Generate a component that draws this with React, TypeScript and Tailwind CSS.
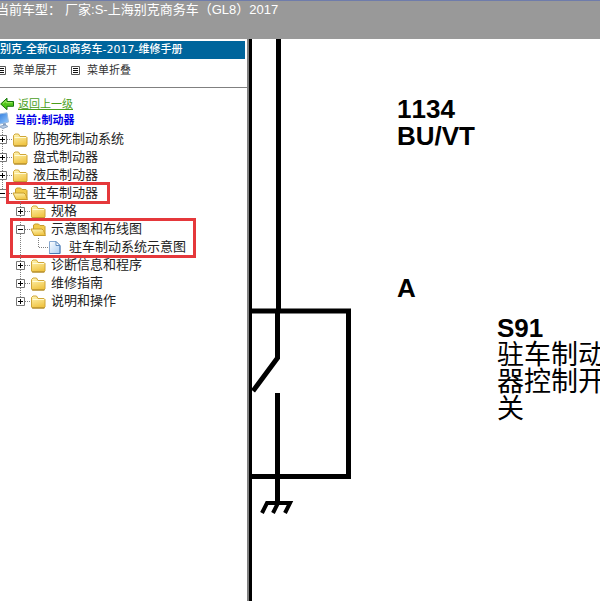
import React from "react";

interface TreeItem {
  label: string;
  kind: "folder" | "open" | "page";
  highlight?: boolean;
  children?: TreeItem[];
}

const TREE: TreeItem[] = [
  { label: "防抱死制动系统", kind: "folder" },
  { label: "盘式制动器", kind: "folder" },
  { label: "液压制动器", kind: "folder" },
  {
    label: "驻车制动器",
    kind: "open",
    highlight: true,
    children: [
      { label: "规格", kind: "folder" },
      {
        label: "示意图和布线图",
        kind: "open",
        highlight: true,
        children: [{ label: "驻车制动系统示意图", kind: "page" }],
      },
      { label: "诊断信息和程序", kind: "folder" },
      { label: "维修指南", kind: "folder" },
      { label: "说明和操作", kind: "folder" },
    ],
  },
];

// gradients shared by all tree icons
function IconDefs() {
  return (
    <svg width="0" height="0" className="absolute" aria-hidden="true">
      <defs>
        <linearGradient id="folder" x1="0" y1="0" x2="0.3" y2="1">
          <stop offset="0" stopColor="#fff6b8" />
          <stop offset="1" stopColor="#f0c545" />
        </linearGradient>
        <linearGradient id="page" x1="0" y1="0" x2="1" y2="1">
          <stop offset="0" stopColor="#fff" />
          <stop offset="1" stopColor="#a9cdf3" />
        </linearGradient>
        <linearGradient id="screen" x1="0" y1="0" x2="1" y2="1">
          <stop offset="0" stopColor="#1f6fd8" />
          <stop offset="1" stopColor="#9fd0ff" />
        </linearGradient>
      </defs>
    </svg>
  );
}

function FolderIcon() {
  return (
    <svg width="18" height="18" viewBox="0 0 18 18" className="shrink-0">
      <path
        d="M1.500 15V5.500L3 4H6.500L8 6.500H14L15 7.500V15L14 16H2.500z"
        fill="url(#folder)"
        stroke="#d0a637"
      />
      <path d="M2.500 7.500H14" stroke="#fffbd6" />
      <path d="M2 16H14.500" stroke="#a88226" />
    </svg>
  );
}

function OpenFolderIcon() {
  return (
    <svg width="18" height="18" viewBox="0 0 18 18" className="shrink-0">
      <path
        d="M3.500 14V5L5 4H8.500L10 5.500H14L15 6.500V14z"
        fill="#f2cb4c"
        stroke="#c79c2c"
      />
      <path
        d="M1 9H12L13.500 10.500L15.500 15.500H4z"
        fill="url(#folder)"
        stroke="#c79c2c"
        strokeLinejoin="round"
      />
    </svg>
  );
}

function PageIcon() {
  return (
    <svg width="18" height="18" viewBox="0 0 18 18" className="shrink-0">
      <path d="M1.500 3.500H8L12 7.500V15.500H1.500z" fill="url(#page)" stroke="#86a8d0" />
      <path d="M8 3.500V7.500H12z" fill="#fff" stroke="#5f8cc0" />
      <path d="M12 8V15.500H1.500" fill="none" stroke="#4a7ab5" />
    </svg>
  );
}

function ComputerIcon() {
  return (
    <svg width="18" height="18" viewBox="0 0 18 18" className="shrink-0">
      <path
        d="M2 2.500L13 .8L14.500 10L4 12.500z"
        fill="url(#screen)"
        stroke="#9dbde0"
        strokeLinejoin="round"
      />
      <path d="M9 11.500L11.500 11L12.500 14H9z" fill="#7f9cc0" />
      <path d="M5 14.500L11 13L14 14.500L9 16.500z" fill="#b7cce6" stroke="#8ea6c4" />
    </svg>
  );
}

function BackIcon() {
  return (
    <svg width="14" height="14" viewBox="0 0 14 14" className="shrink-0">
      <path
        d="M.7 7L7 1.200V4.500H13.500V9.300H7V12.700z"
        fill="#4fc51c"
        stroke="#16750a"
      />
      <path d="M3 6.500L6 3.700V5.700H12.500" fill="none" stroke="#a5ec6c" />
    </svg>
  );
}

function ListIcon() {
  return (
    <svg width="9" height="9" viewBox="0 0 9 9" className="shrink-0">
      <path d="M.5.5h8v8h-8z" fill="#fff" stroke="#555" />
      <path d="M2 2.500h5M2 4.500h5M2 6.500h5" stroke="#111" />
    </svg>
  );
}

// dotted connector lines plus the +/- box
function Joint({ item, last }: { item: TreeItem; last: boolean }) {
  const lines = (
    <svg width="18" height="18" viewBox="0 0 18 18">
      <path
        d={last ? "M8.500 0V10M9 9.500H18" : "M8.500 0V18M9 9.500H18"}
        stroke="#808080"
        strokeDasharray="1 1"
      />
      {item.kind !== "page" && (
        <>
          <path d="M4.500 5.500h8v8h-8z" fill="#fff" stroke="#777" />
          <path
            d={item.kind === "open" ? "M6 9.500h5" : "M6 9.500h5M8.500 7v5"}
            stroke="#000"
          />
        </>
      )}
    </svg>
  );
  if (item.kind === "page") return <span className="shrink-0">{lines}</span>;
  return (
    <button
      type="button"
      aria-label={item.label}
      aria-expanded={item.kind === "open"}
      className="shrink-0"
    >
      {lines}
    </button>
  );
}

function Branch({ items }: { items: TreeItem[] }) {
  return (
    <ul>
      {items.map((item, idx) => {
        const last = idx === items.length - 1;
        // a folder with a single page is framed together with that page
        const whole = item.highlight && item.children?.length === 1;
        return (
          <li key={item.label} className="relative">
            <div className="relative flex h-[18px] w-max items-center">
              <Joint item={item} last={last} />
              {item.kind === "folder" && <FolderIcon />}
              {item.kind === "open" && <OpenFolderIcon />}
              {item.kind === "page" && <PageIcon />}
              <a href="#" className="ml-[3px] text-[13px] leading-[18px] text-[#222]">
                {item.label}
              </a>
              {item.highlight && !whole && (
                <span className="pointer-events-none absolute -top-0.5 -right-3 -bottom-0.5 left-3 border-3 border-[#e5383b]" />
              )}
            </div>
            {item.children && (
              <div className="flex w-max">
                <div className="w-[18px] shrink-0">
                  {!last && (
                    <svg width="18" height="18" viewBox="0 0 18 18">
                      <path d="M8.500 0V18" stroke="#808080" strokeDasharray="1 1" />
                    </svg>
                  )}
                </div>
                <Branch items={item.children} />
              </div>
            )}
            {whole && (
              <span className="pointer-events-none absolute -top-0.5 -bottom-0.5 -left-0.5 w-[186px] border-3 border-[#e5383b]" />
            )}
          </li>
        );
      })}
    </ul>
  );
}

function Sidebar() {
  return (
    <nav className="w-[247px] shrink-0 overflow-hidden pt-0.5">
      <IconDefs />
      <h1 className="mr-0.5 bg-[#00659c] font-['DejaVu_Sans','Noto_Sans_CJK_SC',sans-serif] text-[11px] leading-[18px] font-medium whitespace-nowrap text-white">
        别克-全新GL8商务车-2017-维修手册
      </h1>
      <div className="flex gap-3.5 border-b border-[#808080] pt-0.5 pb-2 text-[11px] leading-[18px] text-[#333]">
        <button type="button" className="-ml-[3px] flex items-center gap-[7px]">
          <ListIcon />
          菜单展开
        </button>
        <button type="button" className="flex items-center gap-[7px]">
          <ListIcon />
          菜单折叠
        </button>
      </div>
      <div className="pt-2">
        <div className="flex h-4 items-center gap-1">
          <BackIcon />
          <a href="#" className="text-[11px] leading-4 text-[#4a9e1c] underline">
            返回上一级
          </a>
        </div>
        <div className="-ml-1.5">
          <div className="flex h-[18px] items-center gap-[3px] font-['DejaVu_Sans','Noto_Sans_CJK_SC',sans-serif] text-[11px] leading-4 font-bold text-[#0000e8]">
            <ComputerIcon />
            <span>当前:制动器</span>
          </div>
          <Branch items={TREE} />
        </div>
      </div>
    </nav>
  );
}

function Diagram() {
  return (
    <main className="relative flex-1 overflow-hidden">
      <svg width="100" height="480" viewBox="0 0 100 480" fill="none" stroke="#000">
        <path d="M26.500 0V272" strokeWidth="5" />
        <path d="M0 272H96.500V437.500H0" strokeWidth="5" />
        <path d="M25.500 270V319L1 352" strokeWidth="5" />
        <path d="M25.500 354V464" strokeWidth="5" />
        <path d="M10 474L15 464H38L33 474M21 474L26 464" strokeWidth="4" />
      </svg>
      <p className="absolute top-[57px] left-[145px] text-[26px] leading-[27px] font-bold [font-kerning:none]">
        1134
        <br />
        BU/VT
      </p>
      <p className="absolute top-[236px] left-[145px] text-[26px] leading-[27px] font-bold">
        A
      </p>
      <div className="absolute top-[276px] left-[245px] text-[26px] leading-[27px]">
        <p className="font-bold">S91</p>
        <p className="w-28 text-[27px]">驻车制动器控制开关</p>
      </div>
    </main>
  );
}

export default function App() {
  return (
    <div className="flex min-h-screen flex-col bg-white font-['Liberation_Sans','Noto_Sans_CJK_SC',sans-serif] text-black">
      <header className="overflow-hidden border-t border-[#6f7cab] bg-[#999] pb-5 text-[13px] leading-[18px] whitespace-nowrap text-white">
        <p className="-ml-1 flex gap-1">
          <span>当前车型：</span>
          <span>厂家:S-上海别克商务车（GL8）2017</span>
        </p>
      </header>
      <div className="flex flex-1">
        <Sidebar />
        <div className="w-[5px] shrink-0 border-l-2 border-[#808080] bg-black" />
        <Diagram />
      </div>
    </div>
  );
}
